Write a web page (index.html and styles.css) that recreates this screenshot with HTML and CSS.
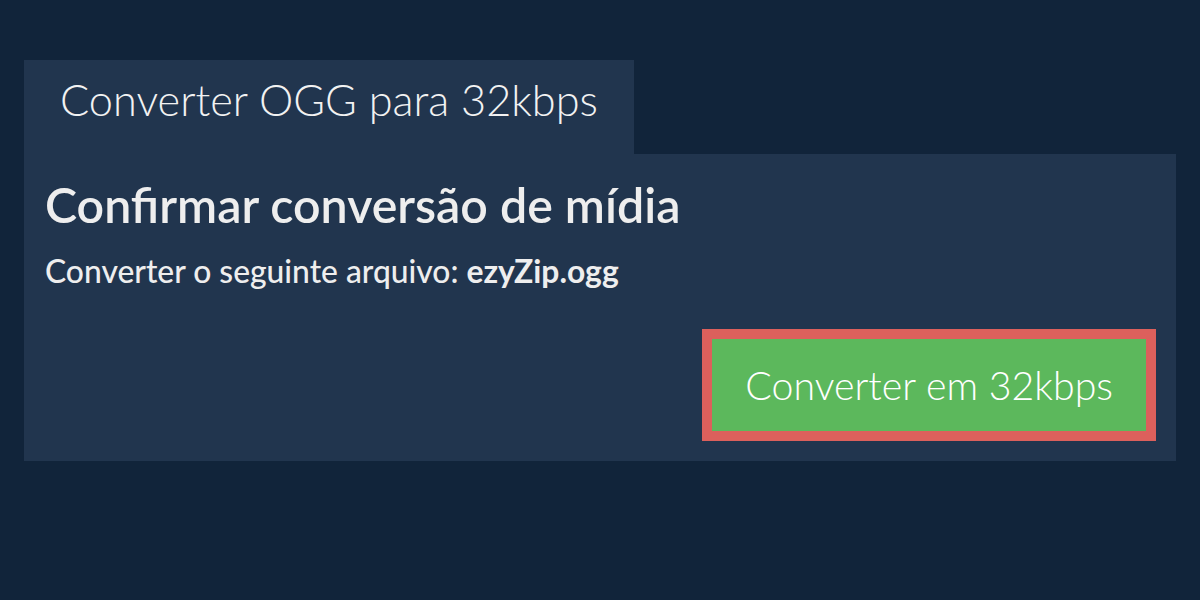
FILE: index.html
```html
<!DOCTYPE html>
<html lang="pt">
<head>
<meta charset="utf-8">
<title>Converter OGG para 32kbps</title>
<link rel="stylesheet" href="styles.css">
</head>
<body>
<div class="wrap">
  <div class="tab">Converter OGG para 32kbps</div>
  <div class="panel">
    <h1 class="title">Confirmar conversão de mídia</h1>
    <p class="file">Converter o seguinte arquivo: <b>ezyZip.ogg</b></p>
    <div class="actions">
      <button class="convert">Converter em 32kbps</button>
    </div>
  </div>
</div>
</body>
</html>
```
FILE: styles.css
```css
html, body {
  margin: 0;
  padding: 0;
  background: #11243a;
  font-family: Lato, "Open Sans", sans-serif;
  color: #eeeeee;
}
.wrap {
  padding: 60px 24px 0;
  display: flex;
  flex-direction: column;
  align-items: flex-start;
}
.tab {
  background: #21354e;
  height: 94px;
  padding: 0 36px;
  font-weight: 300;
  font-size: 43.3px;
  line-height: 78px;
  color: #f2f2f2;
}
.panel {
  align-self: stretch;
  background: #21354e;
  padding: 20px 20px 20px 21px;
  display: flex;
  flex-direction: column;
}
.title {
  margin: 0;
  font-size: 48.3px;
  font-weight: 600;
  line-height: 61px;
}
.file {
  margin: 0;
  font-size: 31.8px;
  font-weight: 500;
  line-height: 72px;
}
.file b {
  font-weight: 700;
}
.actions {
  display: flex;
  justify-content: flex-end;
  margin-top: 22px;
}
.convert {
  background: #5cb85c;
  border: 10px solid #dc605c;
  color: #ffffff;
  font-family: Lato, sans-serif;
  font-weight: 300;
  font-size: 39.3px;
  line-height: 92px;
  height: 112px;
  padding: 0 33px;
  margin: 0;
}
```
